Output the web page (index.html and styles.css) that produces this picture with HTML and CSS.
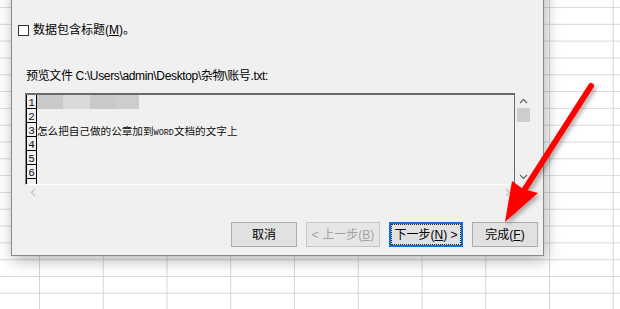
FILE: index.html
```html
<!DOCTYPE html>
<html lang="zh-CN">
<head>
    <meta charset="UTF-8">
    <title>文本导入向导</title>
    <link rel="stylesheet" href="styles.css">
</head>
<body>
    <div class="sheet"></div>

    <div class="window">
        <div class="check"><span class="box"></span><span>数据包含标题(<u>M</u>)。</span></div>

        <div class="caption">预览文件 C:\Users\admin\Desktop\杂物\账号.txt:</div>

        <div class="preview">
            <div class="view">
                <div class="row"><span class="num">1</span><span class="mask"><i class="m1"></i><i class="m2"></i><i class="m1"></i><i class="m3"></i></span></div>
                <div class="row"><span class="num">2</span></div>
                <div class="row"><span class="num">3</span><span class="cell">怎么把自己做的公章加到<span class="word">WORD</span>文档的文字上</span></div>
                <div class="row"><span class="num">4</span></div>
                <div class="row"><span class="num">5</span></div>
                <div class="row"><span class="num">6</span></div>
                <div class="row"><span class="num"></span></div>
            </div>
            <div class="vscroll">
                <svg width="9" height="6" viewBox="0 0 9 6"><polyline points="1,5 4.5,1.5 8,5" fill="none" stroke="#606060" stroke-width="1.2"/></svg>
                <div class="thumb"></div>
                <div class="spacer"></div>
                <svg width="9" height="6" viewBox="0 0 9 6"><polyline points="1,1 4.5,4.5 8,1" fill="none" stroke="#606060" stroke-width="1.2"/></svg>
            </div>
            <div class="hscroll">
                <svg width="6" height="9" viewBox="0 0 6 9"><polyline points="5,1 1.5,4.5 5,8" fill="none" stroke="#c2c2c2" stroke-width="1.2"/></svg>
                <svg width="6" height="9" viewBox="0 0 6 9"><polyline points="1,1 4.5,4.5 1,8" fill="none" stroke="#c2c2c2" stroke-width="1.2"/></svg>
            </div>
            <div class="corner"></div>
        </div>

        <div class="buttons">
            <div class="btn small"><span>取消</span></div>
            <div class="btn disabled"><span>&lt; 上一步(<u>B</u>)</span></div>
            <div class="btn focused"><span class="focus"><span>下一步(<u>N</u>) &gt;</span></span></div>
            <div class="btn small"><span>完成(<u>F</u>)</span></div>
        </div>
    </div>

    <!-- red arrow drawn over the screenshot -->
    <svg class="arrow" width="620" height="309" viewBox="0 0 620 309">
        <defs>
            <filter id="shade" x="-20%" y="-20%" width="140%" height="140%">
                <feDropShadow dx="2" dy="3" stdDeviation="2" flood-color="#000" flood-opacity="0.3"/>
            </filter>
        </defs>
        <g filter="url(#shade)">
            <line x1="591" y1="86" x2="523" y2="192" stroke="#ff0000" stroke-width="6" stroke-linecap="round"/>
            <polygon points="505,222 512,181 523,189 538,193" fill="#ff0000"/>
        </g>
    </svg>
</body>
</html>
```

FILE: styles.css
```css
body {
    margin: 0;
    width: 620px;
    height: 309px;
    overflow: hidden;
    position: relative;
    background: #fff;
    font-family: "Liberation Sans", "Noto Sans CJK SC", sans-serif;
    font-size: 12px;
    color: #000;
}
.sheet {
    width: 620px;
    height: 309px;
    background-image:
        linear-gradient(to right, #d6d6d6 1px, transparent 1px),
        linear-gradient(to bottom, #d9d9d9 1px, transparent 1px);
    background-size: 63.75px 100%, 100% 16.82px;
    background-position: 39px 0, 0 7px;
}
.window {
    position: absolute;
    left: 11px;
    top: -20px;
    width: 533px;
    height: 276px;
    box-sizing: border-box;
    border: 1px solid #8a8a8a;
    background: #f0f0f0;
    box-shadow: 2px 4px 14px rgba(0, 0, 0, 0.3);
    padding-top: 40px;
}
.check {
    display: flex;
    align-items: center;
    height: 18px;
    line-height: 18px;
    margin-left: 6px;
    gap: 4px;
}
.box {
    width: 9px;
    height: 9px;
    border: 1px solid #333;
    background: #fff;
}
.caption {
    margin: 29px 0 0 14px;
    height: 16px;
    line-height: 16px;
    letter-spacing: -0.35px;
}
.preview {
    margin: 9px 0 0 13px;
    width: 506px;
    display: grid;
    grid-template-columns: 490px 16px;
    grid-template-rows: 92px 15px;
}
.view {
    box-sizing: border-box;
    border-top: 2px solid #6a6a6a;
    border-left: 1px solid #8a8a8a;
    border-right: 1px solid #6a6a6a;
    border-bottom: 1px solid #fff;
    overflow: hidden;
}
.row {
    display: flex;
    height: 14px;
}
.num {
    box-sizing: border-box;
    width: 11px;
    height: 14px;
    border-left: 1px solid #000;
    border-right: 1px solid #000;
    border-bottom: 1px solid #000;
    font-family: "Liberation Mono", monospace;
    font-size: 11px;
    line-height: 17px;
    text-align: center;
    color: #111;
}
.mask {
    display: flex;
}
.mask i {
    display: block;
    height: 14px;
}
.mask .m1 { width: 26px; background: #c9c9c9; }
.mask .m2 { width: 27px; background: #dadada; }
.mask .m3 { width: 23px; background: #cdcdcd; }
.cell {
    font-family: "Noto Sans CJK SC", sans-serif;
    font-size: 10.6px;
    line-height: 15px;
    white-space: nowrap;
    color: #111;
}
.word {
    font-family: "Liberation Mono", monospace;
    font-size: 8.5px;
}
.vscroll {
    display: flex;
    flex-direction: column;
    align-items: center;
    padding-top: 5px;
}
.thumb {
    width: 13px;
    height: 14px;
    margin-top: 4px;
    background: #cdcdcd;
}
.spacer {
    flex: 1;
}
.vscroll svg:last-child {
    margin-bottom: 5px;
}
.hscroll {
    display: flex;
    justify-content: space-between;
    align-items: center;
    padding: 0 4px 0 5px;
}
.buttons {
    display: flex;
    justify-content: flex-end;
    gap: 9px;
    margin: 22px 5px 0 0;
}
.btn {
    box-sizing: border-box;
    width: 74px;
    height: 25px;
    border: 1px solid #adadad;
    background: #e1e1e1;
    display: flex;
    align-items: center;
    justify-content: center;
    line-height: 16px;
}
.btn.small {
    width: 66px;
}
.btn.disabled {
    color: #a3a3a3;
    border-color: #c6c6c6;
    background: #e6e6e6;
}
.btn.focused {
    border: 2px solid #0a6fd8;
    padding: 1px;
}
.focus {
    flex: 1;
    align-self: stretch;
    display: flex;
    align-items: center;
    justify-content: center;
    outline: 1px dotted #222;
}
.arrow {
    position: absolute;
    left: 0;
    top: 0;
    pointer-events: none;
}
```
